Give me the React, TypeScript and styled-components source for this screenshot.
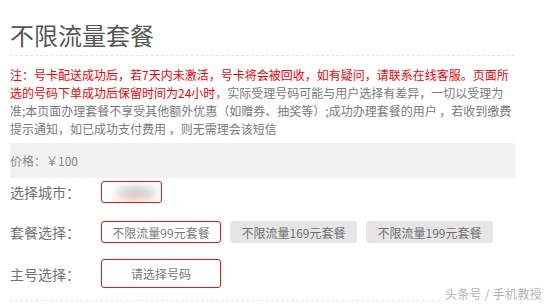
import React from 'react';
import styled, { createGlobalStyle } from 'styled-components';

const GlobalStyle = createGlobalStyle`
	html, body {
		margin: 0;
		padding: 0;
		background: #fff;
	}
	body {
		font-family: 'Noto Sans CJK SC', 'Noto Sans', sans-serif;
		color: #666;
	}
`;

const Page = styled.div`
	position: relative;
	width: 549px;
	height: 304px;
	overflow: hidden;
	padding: 0 10px;
	box-sizing: border-box;
`;

const Content = styled.div`
	width: 505px;
`;

const Title = styled.h1`
	margin: 0;
	padding: 20px 0 5px;
	font-size: 24px;
	line-height: 30px;
	font-weight: 400;
	color: #555;
	border-bottom: 1px dashed #e6e6e6;
`;

const Notice = styled.div`
	margin-top: 10px;
	font-size: 12px;
	line-height: 18px;
	color: #7a7a7a;
`;

const NoticeLine = styled.div`
	white-space: nowrap;
`;

const Red = styled.span`
	color: #ff0000;
`;

const PriceBar = styled.div`
	margin-top: 5px;
	height: 35px;
	line-height: 35px;
	background: #f2f2f2;
	font-size: 12px;
	color: #888;
`;

const Row = styled.div<{ $top: number }>`
	display: flex;
	align-items: center;
	margin-top: ${(p) => p.$top}px;
`;

const Label = styled.div`
	width: 91px;
	flex-shrink: 0;
	font-size: 14px;
	line-height: 20px;
	color: #737373;
`;

const Options = styled.div`
	display: flex;
	gap: 9px;
`;

const Choice = styled.div<{ $w: number; $h: number; $active?: boolean }>`
	width: ${(p) => p.$w}px;
	height: ${(p) => p.$h}px;
	box-sizing: border-box;
	display: flex;
	align-items: center;
	justify-content: center;
	border-radius: 3px;
	font-size: 12px;
	white-space: nowrap;
	color: ${(p) => (p.$active ? '#7a7a7a' : '#6e6e6e')};
	background: ${(p) => (p.$active ? '#fff' : '#e6e6e6')};
	border: ${(p) => (p.$active ? '1px solid #f01414' : 'none')};
	position: relative;
	overflow: hidden;
`;

const Blur = styled.span`
	display: block;
	width: 40px;
	height: 10px;
	border-radius: 50%;
	background: #c8cbc6;
	filter: blur(4px);
	margin-left: 8px;
	box-shadow: 0 7px 6px rgba(255, 120, 120, 0.35);
`;

const BottomRule = styled.div`
	margin-top: 12px;
	border-top: 1px dashed #e6e6e6;
`;

const Watermark = styled.div`
	position: absolute;
	right: 7px;
	bottom: 2px;
	font-size: 12px;
	line-height: 16px;
	color: #b4b4b4;
	background: #fff;
	padding-left: 3px;
	letter-spacing: 0.3px;
`;

const App = () => {
	return (
		<Page>
			<GlobalStyle />
			<Content>
				<Title>不限流量套餐</Title>
				<Notice>
					<NoticeLine>
						<Red>注：号卡配送成功后，若7天内未激活，号卡将会被回收，如有疑问，请联系在线客服。页面所</Red>
					</NoticeLine>
					<NoticeLine>
						<Red>选的号码下单成功后保留时间为24小时</Red>，实际受理号码可能与用户选择有差异，一切以受理为
					</NoticeLine>
					<NoticeLine>准;本页面办理套餐不享受其他额外优惠（如赠券、抽奖等）;成功办理套餐的用户 ，若收到缴费</NoticeLine>
					<NoticeLine>提示通知，如已成功支付费用 ，则无需理会该短信</NoticeLine>
				</Notice>
				<PriceBar>价格：￥100</PriceBar>
				<Row $top={3}>
					<Label>选择城市：</Label>
					<Choice $w={61} $h={22} $active>
						<Blur />
					</Choice>
				</Row>
				<Row $top={18}>
					<Label>套餐选择：</Label>
					<Options>
						<Choice $w={120} $h={22} $active>
							不限流量99元套餐
						</Choice>
						<Choice $w={127} $h={22}>
							不限流量169元套餐
						</Choice>
						<Choice $w={127} $h={22}>
							不限流量199元套餐
						</Choice>
					</Options>
				</Row>
				<Row $top={16}>
					<Label>主号选择：</Label>
					<Choice $w={120} $h={29} $active>
						请选择号码
					</Choice>
				</Row>
				<BottomRule />
			</Content>
			<Watermark>头条号 / 手机教授</Watermark>
		</Page>
	);
};

export default App;
